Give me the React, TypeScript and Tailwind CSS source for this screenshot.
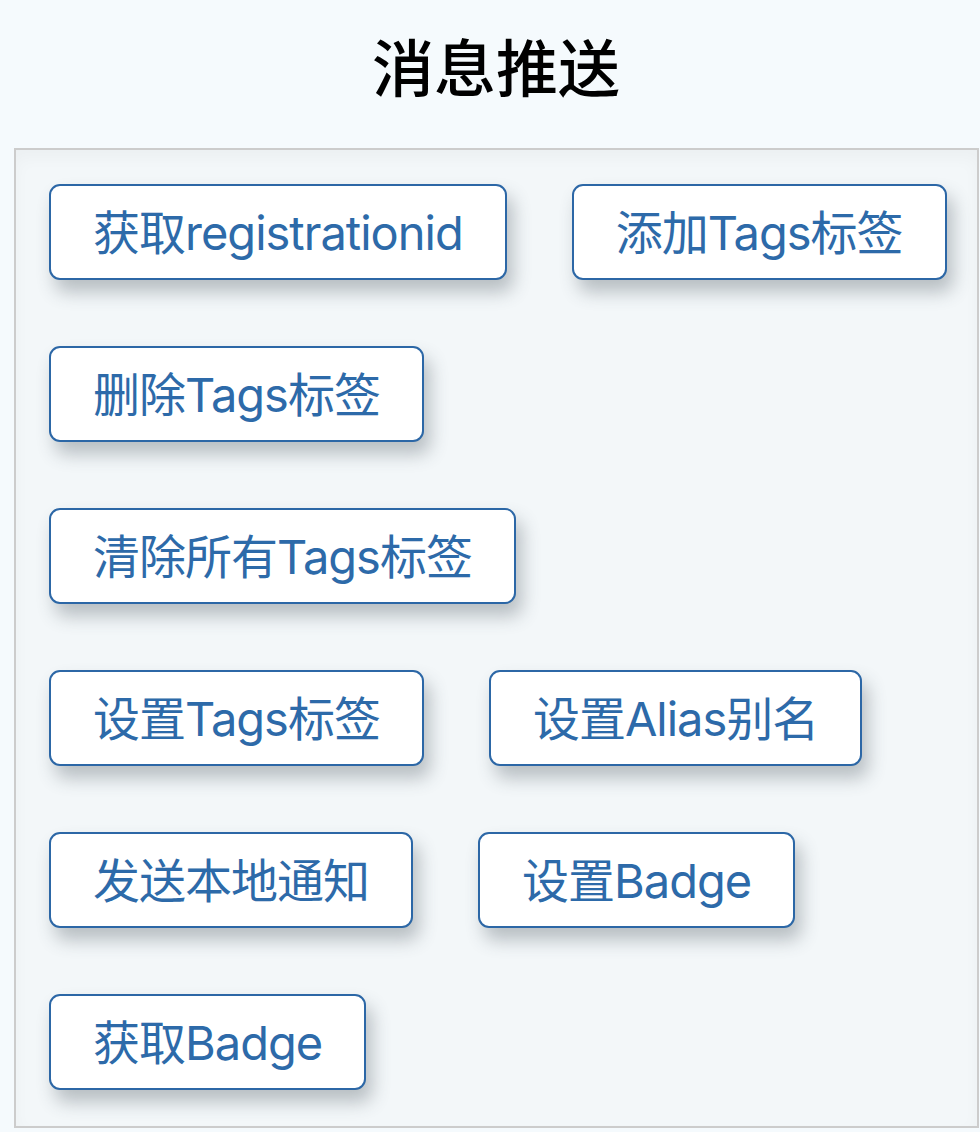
import React from "react";

const rows = [
  ["获取registrationid", "添加Tags标签"],
  ["删除Tags标签"],
  ["清除所有Tags标签"],
  ["设置Tags标签", "设置Alias别名"],
  ["发送本地通知", "设置Badge"],
  ["获取Badge"],
];

export default function App() {
  return (
    <div
      className="min-h-[1132px] w-[980px] bg-[#f5fafd] pt-[26px]"
      style={{ fontFamily: 'Inter, "Noto Sans CJK SC", sans-serif' }}
    >
      <h1 className="pl-[12px] text-center text-[62px] leading-[88px] font-medium text-black">
        消息推送
      </h1>
      <div className="mt-[34px] ml-[14px] w-[965px] border-2 border-[#cccccc] bg-[#f3f7f9] pt-[34px] pb-[36px] pl-[33px] pr-[20px] shadow-[inset_0_8px_16px_rgba(0,0,0,0.03)]">
        <div className="flex flex-col gap-y-[66px]">
          {rows.map((row, i) => (
            <div key={i} className="flex gap-x-[65px]">
              {row.map((l) => (
                <button
                  key={l}
                  className="flex h-[96px] shrink-0 items-center whitespace-nowrap rounded-[11px] border-2 border-[#2c67a6] bg-white px-[42px] text-[47px] leading-none tracking-[-1px] text-[#2d6aa9] shadow-[6px_12px_18px_rgba(60,70,80,0.32)]"
                >
                  {l}
                </button>
              ))}
            </div>
          ))}
        </div>
      </div>
    </div>
  );
}
